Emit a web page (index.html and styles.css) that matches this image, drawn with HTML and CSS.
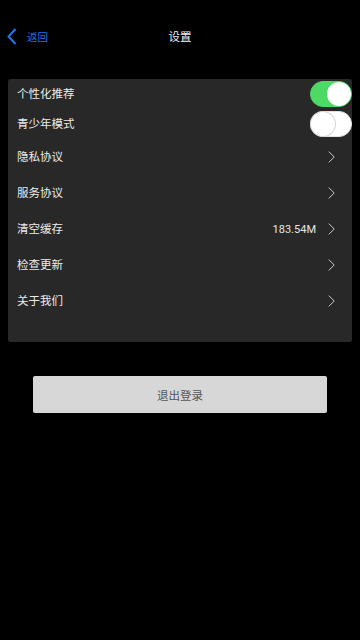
FILE: index.html
```html
<!DOCTYPE html>
<html>
<head>
 <meta charset="utf-8">
 <title>设置</title>
 <link rel="stylesheet" href="styles.css">
</head>
<body>
 <!-- top bar with back link and title -->
 <div class="top-bar">
  <a class="back-link" href="#">
   <svg class="back-icon" width="10" height="17" viewBox="0 0 10 17">
    <path d="M8.5 1 L1.5 8.5 L8.5 16" fill="none" stroke="#1f78f0" stroke-width="2"/>
   </svg>
   <span>返回</span>
  </a>
  <div class="top-title">设置</div>
 </div>

 <!-- settings list -->
 <div class="settings-card">
  <div class="setting-row switch-row">
   <span class="setting-label">个性化推荐</span>
   <span class="switch on"><span class="switch-knob"></span></span>
  </div>
  <div class="setting-row switch-row">
   <span class="setting-label">青少年模式</span>
   <span class="switch"><span class="switch-knob"></span></span>
  </div>
  <div class="setting-row">
   <span class="setting-label">隐私协议</span>
   <svg class="arrow" width="7" height="12" viewBox="0 0 7 12"><path d="M0.8 0.6 L6.2 6 L0.8 11.4" fill="none" stroke="#c8c8c8" stroke-width="1"/></svg>
  </div>
  <div class="setting-row">
   <span class="setting-label">服务协议</span>
   <svg class="arrow" width="7" height="12" viewBox="0 0 7 12"><path d="M0.8 0.6 L6.2 6 L0.8 11.4" fill="none" stroke="#c8c8c8" stroke-width="1"/></svg>
  </div>
  <div class="setting-row">
   <span class="setting-label">清空缓存</span>
   <span class="setting-value">183.54M</span>
   <svg class="arrow" width="7" height="12" viewBox="0 0 7 12"><path d="M0.8 0.6 L6.2 6 L0.8 11.4" fill="none" stroke="#c8c8c8" stroke-width="1"/></svg>
  </div>
  <div class="setting-row">
   <span class="setting-label">检查更新</span>
   <svg class="arrow" width="7" height="12" viewBox="0 0 7 12"><path d="M0.8 0.6 L6.2 6 L0.8 11.4" fill="none" stroke="#c8c8c8" stroke-width="1"/></svg>
  </div>
  <div class="setting-row">
   <span class="setting-label">关于我们</span>
   <svg class="arrow" width="7" height="12" viewBox="0 0 7 12"><path d="M0.8 0.6 L6.2 6 L0.8 11.4" fill="none" stroke="#c8c8c8" stroke-width="1"/></svg>
  </div>
 </div>

 <!-- logout button -->
 <div class="logout-wrap">
  <button class="logout-button">退出登录</button>
 </div>
</body>
</html>
```

FILE: styles.css
```css
/* page */
body {
 margin: 0;
 background: #000;
 color: #ececec;
 font-family: "Noto Sans CJK SC", "Noto Sans", Roboto, sans-serif;
 font-size: 11.5px;
}

/* top bar */
.top-bar {
 display: flex;
 align-items: center;
 justify-content: center;
 height: 72px;
 position: relative;
}
.back-link {
 position: absolute;
 left: 7px;
 top: 28px;
 display: flex;
 align-items: center;
 gap: 10px;
 color: #1f6fe6;
 text-decoration: none;
 font-size: 10.5px;
}
.back-icon {
 display: block;
}
.top-title {
 color: #f0f0f0;
 font-size: 11.5px;
}

/* settings card */
.settings-card {
 margin: 7px 8px 0 8px;
 background: #282828;
 border-radius: 3px;
 padding-bottom: 23px;
}
.setting-row {
 display: flex;
 align-items: center;
 height: 36px;
 padding: 0 17px 0 9px;
}
.switch-row {
 height: 30px;
 padding-right: 0;
}
.setting-label {
 flex: 1;
 margin-bottom: 2px;
}
.switch-row .setting-label {
 margin-bottom: 3px;
}
.setting-value {
 font-family: Roboto, "Noto Sans", sans-serif;
 font-size: 11px;
 margin-right: 12px;
 color: #e6e6e6;
}
.arrow {
 display: block;
}

/* switches */
.switch {
 display: flex;
 align-items: center;
 width: 42px;
 height: 26px;
 box-sizing: border-box;
 border-radius: 13px;
 background: #fff;
 border: 1px solid #e2e2e2;
 padding: 0;
}
.switch .switch-knob {
 width: 24px;
 height: 24px;
 border-radius: 50%;
 background: #fff;
 box-shadow: 0 0 0 1px #d4d4d4;
}
.switch.on {
 background: #4cd964;
 border-color: #4cd964;
 justify-content: flex-end;
}
.switch.on .switch-knob {
 box-shadow: none;
}

/* logout button */
.logout-wrap {
 padding: 34px 33px 0 33px;
}
.logout-button {
 display: block;
 width: 100%;
 height: 37px;
 border: none;
 border-radius: 2px;
 background: #d6d7d6;
 color: #555;
 font-family: "Noto Sans CJK SC", "Noto Sans", sans-serif;
 font-size: 11.5px;
}
```
